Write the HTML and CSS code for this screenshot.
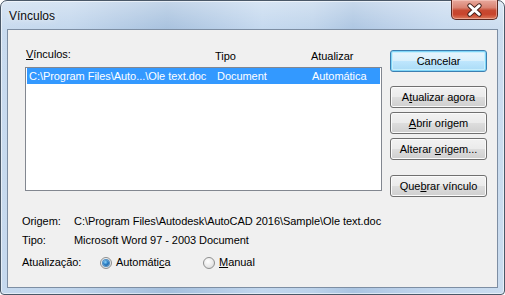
FILE: index.html
```html
<!DOCTYPE html>
<html>
<head>
<meta charset="utf-8">
<link rel="stylesheet" href="styles.css">
</head>
<body>
<div class="window">
  <div class="titlebar">
    <span class="title">Vínculos</span>
    <div class="close">
      <svg width="47" height="20" viewBox="0 0 47 20">
        <path d="M18.5 5.5 L28.5 14.5 M28.5 5.5 L18.5 14.5" stroke="#3a1a14" stroke-width="5" stroke-linecap="round" fill="none"/>
        <path d="M18.5 5.5 L28.5 14.5 M28.5 5.5 L18.5 14.5" stroke="#ffffff" stroke-width="3" stroke-linecap="round" fill="none"/>
      </svg>
    </div>
  </div>
  <div class="client">
    <div class="top">
      <div class="links">
        <div class="cols header">
          <span><u>V</u>ínculos:</span>
          <span class="low">Tipo</span>
          <span class="low">Atualizar</span>
        </div>
        <div class="list">
          <div class="cols row selected">
            <span>C:\Program Files\Auto...\Ole text.doc</span>
            <span>Document</span>
            <span>Automática</span>
          </div>
        </div>
      </div>
      <div class="buttons">
        <button class="btn default">Cancelar</button>
        <button class="btn first">A<u>t</u>ualizar agora</button>
        <button class="btn"><u>A</u>brir origem</button>
        <button class="btn">Alterar <u>o</u>rigem...</button>
        <button class="btn last">Que<u>b</u>rar vínculo</button>
      </div>
    </div>
    <div class="details">
      <div class="drow"><span class="dlabel">Origem:</span><span>C:\Program Files\Autodesk\AutoCAD 2016\Sample\Ole text.doc</span></div>
      <div class="drow second"><span class="dlabel">Tipo:</span><span>Microsoft Word 97 - 2003 Document</span></div>
      <div class="drow update">
        <span class="ulabel">Atualização:</span>
        <span class="radio checked"></span><span class="rtext first-opt">Automáti<u>c</u>a</span>
        <span class="radio"></span><span class="rtext"><u>M</u>anual</span>
      </div>
    </div>
  </div>
</div>
</body>
</html>
```

FILE: styles.css
```css
html, body {
  margin: 0;
  padding: 0;
  width: 505px;
  height: 295px;
  overflow: hidden;
  background: #ffffff;
}

.window {
  box-sizing: border-box;
  width: 505px;
  height: 295px;
  border: 1px solid #4a5868;
  border-radius: 7px 7px 4px 4px;
  padding: 0 6px 6px 6px;
  display: flex;
  flex-direction: column;
  font-family: "Liberation Sans", Arial, sans-serif;
  font-size: 11px;
  letter-spacing: -0.05px;
  color: #000;
  background:
    linear-gradient(180deg, rgba(255,255,255,0.35) 0px, rgba(255,255,255,0.05) 28px, rgba(255,255,255,0) 100%),
    linear-gradient(90deg, #c6d9ee 0%, #c0d5ec 14%, #b1c9e4 24%, #a4bfdd 33%, #b2cae5 42%, #c2d7ee 52%, #bcd2ea 62%, #aac4e1 70%, #b8cee8 78%, #c4d8ee 88%, #cadcef 100%);
  box-shadow: inset 0 0 0 1px rgba(255,255,255,0.55);
}

.titlebar {
  height: 28px;
  display: flex;
  justify-content: space-between;
  align-items: flex-start;
  flex: none;
}

.title {
  padding: 8px 0 0 2px;
  font-size: 12px;
  line-height: 15px;
  letter-spacing: 0;
  color: #0b0b0b;
  text-shadow: 0 0 6px rgba(255,255,255,0.9);
}

.close {
  width: 47px;
  height: 20px;
  margin-top: -1px;
  box-sizing: border-box;
  border: 1px solid #5a2820;
  border-top: none;
  border-radius: 0 0 5px 5px;
  background: linear-gradient(180deg, #e8a99d 0%, #d98372 40%, #c74a32 55%, #c8442c 75%, #dc7a5c 100%);
  box-shadow: inset 0 0 0 1px rgba(255,220,210,0.45);
  display: flex;
}

.client {
  flex: 1;
  border: 1px solid #7d8ea3;
  background: #f0f0f0;
  display: flex;
  flex-direction: column;
}

.top {
  display: flex;
  padding-left: 17px;
}

.links {
  width: 357px;
}

.cols {
  display: grid;
  grid-template-columns: 189px 96px 1fr;
  white-space: nowrap;
}

.header {
  margin-top: 18px;
  height: 13px;
  line-height: 13px;
  padding-left: 1px;
}

.low {
  padding-top: 2px;
}

.list {
  margin-top: 6px;
  box-sizing: border-box;
  height: 124px;
  border: 1px solid #828790;
  background: #ffffff;
}

.row {
  grid-template-columns: 188px 95px 1fr;
  height: 16px;
  line-height: 16px;
  margin: 0 1px;
  padding-left: 2px;
}

.selected {
  background: #3399ff;
  color: #ffffff;
}

.buttons {
  margin-left: 8px;
  width: 97px;
  display: flex;
  flex-direction: column;
}

.btn {
  box-sizing: border-box;
  width: 97px;
  height: 22px;
  margin: 4px 0 0 0;
  padding: 0;
  font-family: "Liberation Sans", Arial, sans-serif;
  font-size: 11px;
  letter-spacing: -0.05px;
  color: #000;
  border: 1px solid #707070;
  border-radius: 3px;
  background: linear-gradient(180deg, #f2f2f2 0%, #ebebeb 48%, #dddddd 52%, #cfcfcf 100%);
  box-shadow: inset 0 0 0 1px #fbfbfb;
  white-space: nowrap;
}

.btn.default {
  margin-top: 20px;
  border-color: #3c7fb1;
  background: linear-gradient(180deg, #e9f6fd 0%, #d9f0fc 48%, #bee6fd 52%, #a9dbf6 100%);
  box-shadow: inset 0 0 0 1px #7fd6f8, inset 0 0 0 2px #c8eefc;
}

.btn.first {
  margin-top: 14px;
}

.btn.last {
  margin-top: 15px;
}

.details {
  margin-top: 18px;
  padding-left: 14px;
  display: flex;
  flex-direction: column;
}

.drow {
  display: flex;
  height: 13px;
  line-height: 13px;
  white-space: nowrap;
}

.drow.second {
  margin-top: 6px;
}

.dlabel {
  width: 52px;
}

.drow.update {
  margin-top: 9px;
  align-items: center;
}

.ulabel {
  width: 78px;
}

.radio {
  box-sizing: border-box;
  width: 12px;
  height: 12px;
  border-radius: 50%;
  border: 1px solid #8e8f8f;
  background: radial-gradient(circle at 40% 35%, #ffffff 0%, #ececec 50%, #d2d2d2 100%);
  display: flex;
  align-items: center;
  justify-content: center;
}

.radio.checked::after {
  content: "";
  width: 6px;
  height: 6px;
  border-radius: 50%;
  background: radial-gradient(circle at 40% 35%, #8fd6fb 0%, #2a7fc6 45%, #174f8a 100%);
  box-shadow: 0 0 0 1px #4f8fc4;
}

.rtext {
  margin-left: 4px;
}

.rtext.first-opt {
  width: 87px;
}
```
